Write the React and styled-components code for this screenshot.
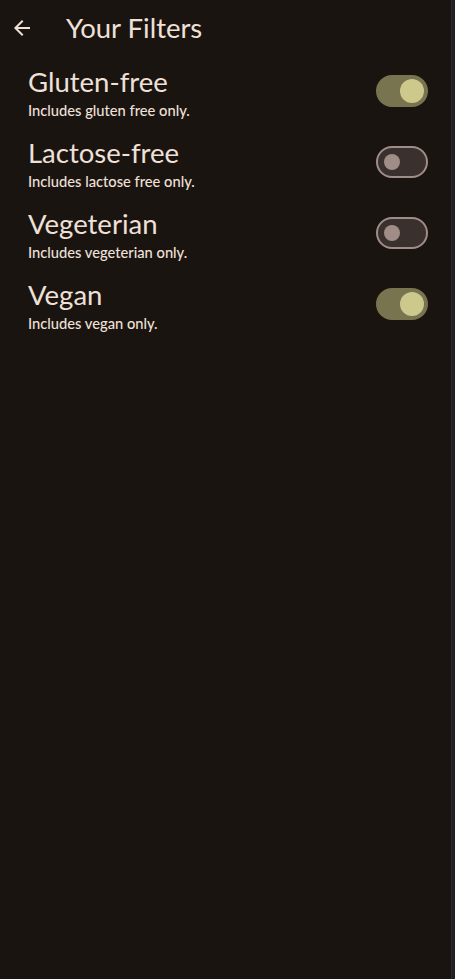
import React, { useState } from "react";
import styled, { createGlobalStyle } from "styled-components";

const GlobalStyle = createGlobalStyle`
  html, body {
    margin: 0;
    padding: 0;
    background: #1a1411;
  }
  body {
    font-family: "Lato", "Noto Sans", sans-serif;
  }
`;

const filterList = [
  { id: "gluten", title: "Gluten-free", sub: "Includes gluten free only.", on: true },
  { id: "lactose", title: "Lactose-free", sub: "Includes lactose free only.", on: false },
  { id: "veg", title: "Vegeterian", sub: "Includes vegeterian only.", on: false },
  { id: "vegan", title: "Vegan", sub: "Includes vegan only.", on: true },
];

export default function App() {
  const [filters, setFilters] = useState(
    Object.fromEntries(filterList.map((f) => [f.id, f.on]))
  );

  const toggle = (id) => setFilters((f) => ({ ...f, [id]: !f[id] }));

  return (
    <>
      <GlobalStyle />
      <Screen>
        <Page>
          <AppBar>
            <BackButton aria-label="Back">
              <svg width="24" height="24" viewBox="0 0 24 24">
                <path
                  d="M20 11H7.83l5.59-5.59L12 4l-8 8 8 8 1.41-1.41L7.83 13H20v-2z"
                  fill="#efe0d8"
                />
              </svg>
            </BackButton>
            <Title>Your Filters</Title>
          </AppBar>
          {filterList.map((f) => (
            <Row key={f.id} onClick={() => toggle(f.id)}>
              <TextBlock>
                <RowTitle>{f.title}</RowTitle>
                <RowSub>{f.sub}</RowSub>
              </TextBlock>
              <Track $on={filters[f.id]}>
                <Thumb $on={filters[f.id]} />
              </Track>
            </Row>
          ))}
        </Page>
        <EdgeStrip />
      </Screen>
    </>
  );
}

const Screen = styled.div`
  display: flex;
  width: 455px;
  height: 979px;
  overflow: hidden;
`;

const Page = styled.div`
  flex: 1;
  background: #1a1411;
  color: #efe0d8;
`;

const EdgeStrip = styled.div`
  width: 3px;
  background: #1f2024;
  border-left: 1px solid #2b2c33;
`;

const AppBar = styled.div`
  height: 56px;
  display: flex;
  align-items: center;
`;

const BackButton = styled.button`
  width: 44px;
  height: 44px;
  display: flex;
  align-items: center;
  justify-content: center;
  background: none;
  border: none;
  padding: 0;
  cursor: pointer;
`;

const Title = styled.h1`
  margin: 0 0 0 22px;
  font-size: 27.5px;
  line-height: 32px;
  font-weight: 400;
`;

const Row = styled.div`
  display: flex;
  align-items: center;
  justify-content: space-between;
  padding: 10px 23px 8px 28px;
  cursor: pointer;
`;

const TextBlock = styled.div`
  display: flex;
  flex-direction: column;
`;

const RowTitle = styled.div`
  font-size: 27.5px;
  line-height: 32px;
`;

const RowSub = styled.div`
  margin-top: 3px;
  font-size: 14.7px;
  line-height: 18px;
  font-weight: 500;
`;

const Track = styled.div`
  box-sizing: border-box;
  width: 52px;
  height: 32px;
  margin-top: -3px;
  border-radius: 16px;
  display: flex;
  align-items: center;
  background: ${(p) => (p.$on ? "#78744f" : "#3a302d")};
  border: 2px solid ${(p) => (p.$on ? "#78744f" : "#a08d88")};
  justify-content: ${(p) => (p.$on ? "flex-end" : "flex-start")};
  padding: ${(p) => (p.$on ? "0 2px" : "0 6px")};
`;

const Thumb = styled.div`
  width: ${(p) => (p.$on ? "24px" : "16px")};
  height: ${(p) => (p.$on ? "24px" : "16px")};
  border-radius: 50%;
  background: ${(p) => (p.$on ? "#cdc98c" : "#a08d88")};
`;
